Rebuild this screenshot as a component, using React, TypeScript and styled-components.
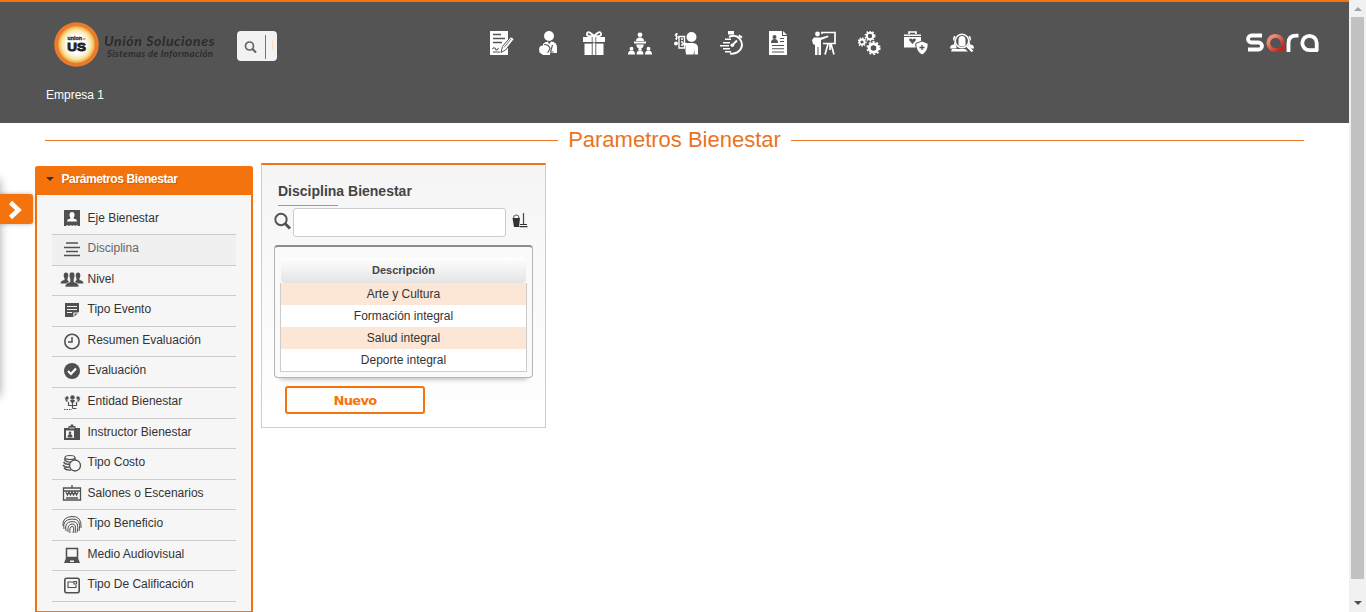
import React from "react";
import styled, { createGlobalStyle } from "styled-components";

const ORANGE = "#f4730c";

const GlobalStyle = createGlobalStyle`
  * { box-sizing: border-box; }
  html, body { margin: 0; height: 100%; overflow: hidden; }
  body { background: #fff; font-family: "Liberation Sans", Arial, sans-serif; font-size: 12px; color: #333; }
`;

const Window = styled.div`
  display: flex;
  height: 612px;
  width: 1366px;
  overflow: hidden;
`;

const Page = styled.div`
  position: relative;
  flex: 1;
  overflow: hidden;
`;

const Header = styled.header`
  height: 123px;
  background: #545454;
  border-top: 2px solid ${ORANGE};
  padding: 19px 30px 0 46px;
`;

const HeaderRow = styled.div`
  display: flex;
  height: 60px;
`;

const Brand = styled.div`
  display: flex;
  width: 191px;
  padding-left: 7px;
`;

const BrandText = styled.div`
  padding: 12px 0 0 4px;
  font-family: Lato, "Open Sans", sans-serif;
  font-style: italic;
  font-weight: 700;
  color: #2b2b2b;
  white-space: nowrap;
`;

const BrandName = styled.div`
  font-size: 14px;
  line-height: 15px;
  letter-spacing: 0.62px;
`;

const BrandTag = styled.div`
  padding-left: 3px;
  font-size: 9.5px;
  line-height: 12px;
  letter-spacing: 0.38px;
`;

const SearchPill = styled.div`
  display: flex;
  align-items: center;
  width: 40px;
  height: 30px;
  margin-top: 10px;
  padding-left: 7px;
  border-radius: 4px;
  background: #f2f2f2;
`;

const PillDivider = styled.i`
  width: 1px;
  height: 24px;
  margin: 2px 0 0 8px;
  background: #777;
`;

const PillCaret = styled.i`
  width: 1px;
  height: 9px;
  margin: -1px 0 0 6px;
  background: #f8dfa4;
`;

const Nav = styled.nav`
  display: flex;
  gap: 22px;
  margin: 10px 0 0 213px;
`;

const NavSvg = styled.svg`
  width: 24px;
  height: 24px;
  fill: #fff;
  flex: none;
`;

const SaraSvg = styled.svg`
  width: 74px;
  height: 22px;
  margin: 11px 0 0 auto;
`;

const Company = styled.div`
  padding-top: 7px;
  line-height: 14px;
  color: #fff;
`;

const TitleBar = styled.div`
  display: flex;
  align-items: center;
  gap: 10px;
  height: 33px;
  padding: 0 45px;
`;

const TitleRule = styled.span`
  flex: 1;
  height: 1px;
  margin-top: 2px;
  background: #e87424;
`;

const Title = styled.h1`
  margin: 0;
  font-size: 22px;
  font-weight: 400;
  line-height: 26px;
  color: #e87424;
`;

const Body = styled.main`
  display: flex;
  align-items: flex-start;
  padding: 7px 0 0 35px;
`;

const Sidebar = styled.aside`
  width: 218px;
  margin-top: 3px;
  border: 2px solid ${ORANGE};
  border-top: 0;
  border-radius: 4px 4px 0 0;
  background: #f6f6f6;
`;

const SidebarHead = styled.div`
  display: flex;
  align-items: center;
  gap: 8px;
  height: 29px;
  margin: 0 -2px;
  padding: 0 10px 3px 10.5px;
  border-radius: 3px 3px 0 0;
  background: ${ORANGE};
  color: #fff;
  font-weight: 700;
  letter-spacing: -0.4px;
  text-shadow: 1px 1px 1px rgba(120, 60, 0, 0.35);
`;

const Arrow = styled.i<{ $up?: boolean; $color: string }>`
  border: solid transparent;
  border-width: ${(p) => (p.$up ? "0 4px 4px" : "4px 4px 0")};
  border-top-color: ${(p) => p.$color};
  border-bottom-color: ${(p) => p.$color};
`;

const Menu = styled.ul`
  margin: 0;
  padding: 9.5px 15px 8.5px;
  list-style: none;
`;

const MenuItem = styled.li<{ $active?: boolean }>`
  display: flex;
  align-items: center;
  height: 30.58px;
  padding-left: 8px;
  border-bottom: 1px solid #ccc;
  background: ${(p) => (p.$active ? "#f0f0f0" : "transparent")};
  color: ${(p) => (p.$active ? "#666" : "#333")};
`;

const MenuSvg = styled.svg`
  width: 24px;
  height: 18px;
  flex: none;
  margin: 0 3.5px 2px 0;
  fill: #505050;
`;

const MenuLabel = styled.span`
  padding-bottom: 3.5px;
  line-height: 14px;
  white-space: nowrap;
`;

const Card = styled.section`
  width: 285px;
  height: 265px;
  margin-left: 8px;
  padding: 18px 12px 0;
  border: 1px solid #ccc;
  border-top: 2px solid #ee7520;
  background: linear-gradient(#f5f5f5, #fff);
`;

const CardTitle = styled.h2`
  margin: 0 4px;
  font-size: 14px;
  line-height: 16px;
  color: #444;
`;

const TitleUnderline = styled.div`
  width: 60px;
  height: 1px;
  margin: 6px 0 2px 4px;
  background: #999;
`;

const FilterRow = styled.div`
  display: flex;
  align-items: center;
  height: 29px;

  svg { margin-bottom: 4px; }
`;

const FilterInput = styled.input`
  width: 213px;
  height: 29px;
  margin: 0 6px 0 2px;
  border: 1px solid #ccc;
  border-radius: 3px;
  background: #fff;
`;

const TableFrame = styled.div`
  width: 259px;
  height: 133px;
  margin-top: 8px;
  padding: 10px 5px 0;
  border: 1px solid #b4b4b4;
  border-top: 2px solid #8c8c8c;
  border-radius: 4px;
  background: #fafafa;
  box-shadow: 0 7px 5px -6px rgba(0, 0, 0, 0.3);
`;

const TableHead = styled.div`
  height: 26px;
  margin: 0 1px;
  border-radius: 4px;
  background: linear-gradient(#fff, #e4e4e4);
  font-size: 11px;
  font-weight: 700;
  line-height: 26px;
  text-align: center;
  color: #444;
`;

const Rows = styled.div`
  border: 1px solid #ccc;
  border-top: 0;
`;

const Row = styled.div`
  height: 22px;
  line-height: 22px;
  text-align: center;
  background: #fff;
  &:nth-child(odd) { background: #fce6d6; }
`;

const NewButton = styled.button`
  display: block;
  width: 140px;
  height: 28px;
  margin: 8px 0 0 11px;
  padding: 0;
  border: 2px solid ${ORANGE};
  border-radius: 3px;
  background: #fff;
  color: ${ORANGE};
  font: 700 13px "DejaVu Sans", Verdana, sans-serif;
  letter-spacing: -0.7px;
`;

const EdgeShadow = styled.div`
  position: absolute;
  left: -10px;
  top: 180px;
  width: 10px;
  height: 216px;
  box-shadow: 0 0 10px rgba(0, 0, 0, 0.35);
`;

const Drawer = styled.button`
  position: absolute;
  left: 0;
  top: 194px;
  display: flex;
  align-items: center;
  width: 33px;
  height: 30px;
  padding: 2px 0 0 8px;
  border: 0;
  border-radius: 0 3px 3px 0;
  background: ${ORANGE};
  box-shadow: 0 0 4px rgba(0, 0, 0, 0.3);
`;

const ScrollTrack = styled.div`
  display: flex;
  flex-direction: column;
  align-items: center;
  justify-content: space-between;
  width: 17px;
  padding: 7px 2px 7px;
  background: #f1f1f1;
`;

const ScrollThumb = styled.div`
  width: 13px;
  height: 562px;
  margin: 6px 0 auto;
  background: #c1c1c1;
`;

const line = (w: number) => ({ fill: "none", stroke: "#fff", strokeWidth: w });
const dark = (w: number) => ({ fill: "none", stroke: "#545454", strokeWidth: w });
const ink = (w: number) => ({ fill: "none", stroke: "#505050", strokeWidth: w });

const gear = (cx: number, cy: number, r: number, w: number, dash: number) => (
  <g>
    <circle cx={cx} cy={cy} r={r} {...line(w)} />
    <circle cx={cx} cy={cy} r={r + w / 2 + 0.5} {...line(1.6)} strokeDasharray={dash} />
  </g>
);

const navIcons: React.ReactNode[] = [
  <>
    <path d="M0 0h18v24H0z" />
    <path d="M3 3.500h8M3 7.500h12M3 11.500h9" {...dark(1.3)} />
    <path d="M2.500 18q2-2.500 3 0t3-1M3 21h7" {...dark(1.1)} />
    <path d="M12.500 15.500 20.500 6q2.500-.5 3.300 2.500l-8.300 10.500-4.500 2.500z" stroke="#545454" />
    <path d="M14 16.500l7-8.500M22.500 10.500v4.500" {...dark(0.8)} />
  </>,
  <>
    <circle cx="13" cy="5" r="5" />
    <path d="M7 13q2-2.300 5-2.500l1 3 2-3q6 .5 6 6V22h-8l-6-2z" />
    <path d="M8 13.500q5 0 6 4l-3 5.500M16.500 14l-2 7h3" {...dark(1.1)} />
    <circle cx="7" cy="18.500" r="3.900" />
    <path d="M3 21l4 3h7v-2l-5-1z" />
  </>,
  <>
    <path d="M1 6h22v5H1zM2.500 12.500h8V24h-8zM13.500 12.500h8V24h-8zM10.700 6h2.600v18h-2.600z" />
    <path d="M12 5Q6-1 5 2.500T12 5Q18-1 19 2.500T12 5" {...line(1.8)} />
    <path d="M10.200 6v18M13.800 6v18M1 11.700h22" {...dark(0.8)} />
  </>,
  <>
    <circle cx="12" cy="3.800" r="2.400" />
    <path d="M8 10q0-3.500 4-3.500t4 3.500zM6 10.500h12v2H6zM8 13.500h8l-1.500 3.500h-5zM0 23.500q0-4 3.500-4t3.500 4zM8.500 23.500q0-4 3.500-4t3.500 4zM17 23.500q0-4 3.500-4t3.500 4z" />
    <circle cx="3.500" cy="17.700" r="1.900" /><circle cx="12" cy="18.200" r="1.700" /><circle cx="20.500" cy="17.700" r="1.900" />
  </>,
  <>
    <circle cx="17.500" cy="6" r="5" />
    <path d="M11.500 20v-5.500l-3.500-1 .5-2 5 .5h5.500q5 .5 5 5v6.500h-3.500v-5l-1 5h-7.500z" />
    <path d="M5 5.500h5.500v11.500H5zM7 8h2M7 11h2M7 14h2" {...line(1.4)} />
    <path d="M4 3q-3-1-3 1t3 2-3 2M2.500 2v7" {...line(1)} />
    <circle cx="2" cy="12.500" r="2" />
  </>,
  <>
    <path d="M9 6q6-3 10.500 1.500 4 5 1.500 10-3.500 6-11 5" {...line(2)} />
    <path d="M8 0h6v3.500H8zM19 3.500l3.500 2-1.200 2-3-2zM5 7.500h6V9H5zM3 11h7v1.500H3zM0 14h9v1.500H0zM3 17h7v1.500H3zM5 20h6v1.500H5z" />
    <path d="M12 14.500l5-5" {...line(2)} />
    <circle cx="12.300" cy="14.200" r="1.800" />
  </>,
  <>
    <path d="M3 0h14l4 4v20H3z" />
    <path d="M16.500 0v4.500H21M14 7.500h4M14 10.500h4M6 14.500h12M6 17.700h12M6 21h12" {...dark(1.1)} />
    <circle cx="8.500" cy="6" r="2" fill="#545454" />
    <path d="M5 12q0-4 3.500-4T12 12z" fill="#545454" />
  </>,
  <>
    <circle cx="5.500" cy="3" r="2.400" />
    <path d="M2 6.500h7l7-2 .5 1.500L9 9v15H6.500v-8h-1v8H3V14l-2-1-1-4z" />
    <path d="M10 3V1.500h13v11H11M16 13l-3 10.500M18 13v6M19 13l3 10.500" {...line(1.7)} />
  </>,
  <>
    {gear(12, 5, 3.200, 2, 1.5)}
    {gear(4, 11, 2.500, 1.800, 1.3)}
    {gear(15.500, 17, 4.300, 3, 2)}
  </>,
  <>
    <path d="M0 3.500h17v13H0z" />
    <path d="M5 3V1h7v2" {...line(1.7)} />
    <path d="M0 5.500h17" {...dark(1)} />
    <path d="M8.500 13L5 9q1-2.500 3.500-.5 2.500-2 3.500.5z" fill="#545454" />
    <path d="M18 10l6.300 2.500q0 8-6.300 11.500-6.300-3.500-6.300-11.500z" stroke="#545454" />
    <path d="M18 14v5M15.500 16.500h5" {...dark(1.300)} />
  </>,
  <>
    <circle cx="12" cy="10" r="6.700" {...line(1.500)} />
    <path d="M8.500 14.500V9q0-4 3.500-4t3.500 4v5.500q-3.500 2-7 0zM2 18h13l3 2.500H1zM0 17.500q0-4 4-4V10q-2-2 0-5h1.500q-2.500 6 1 10.500v2zM24 17.500q0-4-4-4V10q2-2 0-5h-1.500q2.500 5-.5 9.500l3 3z" />
    <path d="M17 15l5.500 5.500" {...line(2.300)} />
  </>,
];

interface Entry { label: string; icon: React.ReactNode; active?: boolean }

const entries: Entry[] = [
  { label: "Eje Bienestar", icon: <><path d="M4 1h16v16H18l-1-1-2 1-1-1-2 1-1-1-2 1-2-1-1 1H4z" /><ellipse cx="12" cy="6" rx="2.500" ry="3" fill="#fff" /><path d="M7 12.500q0-2.500 3.500-3V7h3v2.500q3.500.5 3.500 3z" fill="#fff" /></> },
  { label: "Disciplina", active: true, icon: <path d="M6 3h12M4 7.500h16M6 11.500h12M4 15.500h16" {...ink(1.7)} /> },
  { label: "Nivel", icon: <><ellipse cx="6" cy="5.500" rx="2.300" ry="3" /><ellipse cx="18" cy="5.500" rx="2.300" ry="3" /><path d="M.500 13.500q0-3 4-3.500V7h3v3l3 3.500zM23.500 13.500q0-3-4-3.500V7h-3v3l-3 3.500z" /><path d="M5 17q0-4 5-5V9.500q-2.500-7.500 2-7.500t2 7.500V12q5 1 5 5z" stroke="#f6f6f6" strokeWidth=".6" /></> },
  { label: "Tipo Evento", icon: <><path d="M5 2h14v9l-5 5H5z" /><path d="M7 5.500h10M7 8.500h10M7 11.500h5M14 16v-4h5" stroke="#f6f6f6" strokeWidth="1.200" fill="none" /></> },
  { label: "Resumen Evaluación", icon: <><circle cx="12" cy="9.500" r="7.200" {...ink(1.600)} /><path d="M12 5v5H8" {...ink(1.500)} /></> },
  { label: "Evaluación", icon: <><circle cx="12" cy="9" r="8" /><path d="M8 9l3 3 5-5.500" stroke="#fff" strokeWidth="2.200" fill="none" /></> },
  { label: "Entidad Bienestar", icon: <><circle cx="7" cy="5" r="1.700" /><circle cx="12.500" cy="4.500" r="2.200" /><circle cx="18" cy="5" r="1.700" /><path d="M4.500 4.500l4 4H6zM10 7h5l-1 2.500h-3zM20.500 4.500l-4 4H19z" /><path d="M8.500 9v3.500h8V9M12.500 9v6.500M16.500 15.500h-4" {...ink(1.200)} /><path d="M4 16.500h8" {...ink(1.200)} strokeDasharray="1.500 1" /></> },
  { label: "Instructor Bienestar", icon: <><path d="M4 5h4.500V3h2.200V1.500h2.600V3h2.200v2H20v12H4z" /><path d="M6 7.500h8V15H6z" fill="#f6f6f6" /><path d="M9.500 5h5" stroke="#f6f6f6" strokeWidth=".8" /><circle cx="10" cy="9.700" r="1.300" /><path d="M7.500 14.500q0-3.500 2.500-3.500t2.500 3.500z" /></> },
  { label: "Tipo Costo", icon: <><ellipse cx="10" cy="3.500" rx="5" ry="2" {...ink(1.200)} /><path d="M5 4v2.500q2 2 6 1.500M3.500 8q2 3 6 2M3 11q2 3 6 2M4 14q2 2.500 7 2M15 4v2" {...ink(1.400)} /><circle cx="15" cy="11.500" r="5.500" fill="#f6f6f6" stroke="#505050" strokeWidth="1.300" /></> },
  { label: "Salones o Escenarios", icon: <><path d="M3.500 4h17v12h-17zM3 7h18M12 1v3M6 8l1.500 3L9 8l1.500 3L12 8l1.500 3L15 8l1.500 3L18 8M6 14h12" {...ink(1.300)} /></> },
  { label: "Tipo Beneficio", icon: <path d="M3 11Q2 2 12 1.500T21 13M4 14Q2 4.500 12 4t7 12M6 16Q4 7 12 6.500t5 11M8 17Q7 9.500 12 9t3 9M10 18Q9 12 12 11.500T13 18" {...ink(1)} /> },
  { label: "Medio Audiovisual", icon: <><path d="M6.500 2.500h11v9h-11z" {...ink(1.500)} /><path d="M6 12h12l2 5H4z" /><path d="M10 14.500h4v1.500h-4z" fill="#f6f6f6" /></> },
  { label: "Tipo De Calificación", icon: <><rect x="4.800" y="2.300" width="14.400" height="14.400" rx="2" {...ink(1.600)} /><path d="M14 6H8v5.500h8V9M14 5.500h2.500V8H14z" {...ink(1.100)} /></> },
];

const records = ["Arte y Cultura", "Formación integral", "Salud integral", "Deporte integral"];

const BrandMark = () => (
  <svg width="47" height="46" viewBox="0 0 47 46">
    <defs>
      <radialGradient id="glow">
        <stop offset="0.5" stopColor="#fff" />
        <stop offset="0.78" stopColor="#f8e5a2" />
        <stop offset="0.94" stopColor="#efb44f" />
        <stop offset="1" stopColor="#ef8026" />
      </radialGradient>
    </defs>
    <circle cx="23.500" cy="23.500" r="22.300" fill="#ea7b2c" />
    <circle cx="23.500" cy="23.500" r="18.800" fill="url(#glow)" />
    <text x="14.500" y="18.500" fontFamily="Liberation Sans" fontSize="6" fontWeight="700" textLength="14.500" lengthAdjust="spacingAndGlyphs" fill="#222" stroke="#222" strokeWidth=".3">union</text>
    <path d="M29.500 18h3" stroke="#e33" />
    <text x="14.300" y="30" fontFamily="Liberation Sans" fontSize="11.500" fontWeight="700" textLength="18.500" lengthAdjust="spacingAndGlyphs" fill="#222" stroke="#222" strokeWidth=".9">US</text>
  </svg>
);

const Sara = () => (
  <SaraSvg viewBox="0 0 74 22" fill="none" strokeWidth="3.800">
    <defs>
      <linearGradient id="red" x1="0" y1="0" x2="1" y2="1">
        <stop offset="0.2" stopColor="#f08a70" />
        <stop offset="0.8" stopColor="#c22823" />
      </linearGradient>
    </defs>
    <path d="M17 3.500H6.500a3.500 3.500 0 0 0 0 7h7a3.500 3.500 0 0 1 0 7H3" stroke="#fff" />
    <path d="M39 18.200H30.500a7.200 7.200 0 1 1 7.200-7.200v8" stroke="url(#red)" />
    <path d="M43.500 20v-9q0-7.300 8-7.300h2" stroke="#fff" />
    <path d="M73 18.200H64.500a7.200 7.200 0 1 1 7.200-7.200v8" stroke="#fff" />
  </SaraSvg>
);

export default function App() {
  return (
    <Window>
      <GlobalStyle />
      <Page>
        <Header>
          <HeaderRow>
            <Brand>
              <BrandMark />
              <BrandText>
                <BrandName>Unión Soluciones</BrandName>
                <BrandTag>Sistemas de Información</BrandTag>
              </BrandText>
            </Brand>
            <SearchPill>
              <svg width="13" height="13" viewBox="0 0 13 13" fill="none" stroke="#666" strokeWidth="1.700">
                <circle cx="5.500" cy="6" r="4" />
                <path d="M8.500 9l3.500 3.500" strokeWidth="2.200" />
              </svg>
              <PillDivider />
              <PillCaret />
            </SearchPill>
            <Nav>
              {navIcons.map((icon, i) => (
                <NavSvg key={i} viewBox="0 0 24 24">{icon}</NavSvg>
              ))}
            </Nav>
            <Sara />
          </HeaderRow>
          <Company>Empresa 1</Company>
        </Header>
        <TitleBar>
          <TitleRule />
          <Title>Parametros Bienestar</Title>
          <TitleRule />
        </TitleBar>
        <Body>
          <Sidebar>
            <SidebarHead>
              <Arrow $color="#333" />
              Parámetros Bienestar
            </SidebarHead>
            <Menu>
              {entries.map((e) => (
                <MenuItem key={e.label} $active={e.active}>
                  <MenuSvg viewBox="0 0 24 18">{e.icon}</MenuSvg>
                  <MenuLabel>{e.label}</MenuLabel>
                </MenuItem>
              ))}
            </Menu>
          </Sidebar>
          <Card>
            <CardTitle>Disciplina Bienestar</CardTitle>
            <TitleUnderline />
            <FilterRow>
              <svg width="17" height="18" viewBox="0 0 17 18" fill="none" stroke="#505050">
                <circle cx="7" cy="7.500" r="5.700" strokeWidth="1.900" />
                <path d="M11 11.500l5 5" strokeWidth="2.800" />
              </svg>
              <FilterInput />
              <svg width="16" height="16" viewBox="0 0 16 16" fill="#333">
                <path d="M.500 5h7.500L7 14H2zM8 11h7v1H8zM7.500 13h8v1.200h-8z" />
                <path d="M1.500 5q0-3 2.800-3T7 5" fill="none" stroke="#555" />
                <path d="M11.500 0v11" stroke="#7d2c50" strokeWidth="1.200" />
              </svg>
            </FilterRow>
            <TableFrame>
              <TableHead>Descripción</TableHead>
              <Rows>
                {records.map((r) => <Row key={r}>{r}</Row>)}
              </Rows>
            </TableFrame>
            <NewButton>Nuevo</NewButton>
          </Card>
        </Body>
        <EdgeShadow />
        <Drawer aria-label="Abrir menú">
          <svg width="16" height="20" viewBox="0 0 16 20" fill="none" stroke="#fff" strokeWidth="4.500">
            <path d="M2.500 2.500l8 7.500-8 7.500" />
          </svg>
        </Drawer>
      </Page>
      <ScrollTrack>
        <Arrow $up $color="#a3a3a3" />
        <ScrollThumb />
        <Arrow $color="#505050" />
      </ScrollTrack>
    </Window>
  );
}
